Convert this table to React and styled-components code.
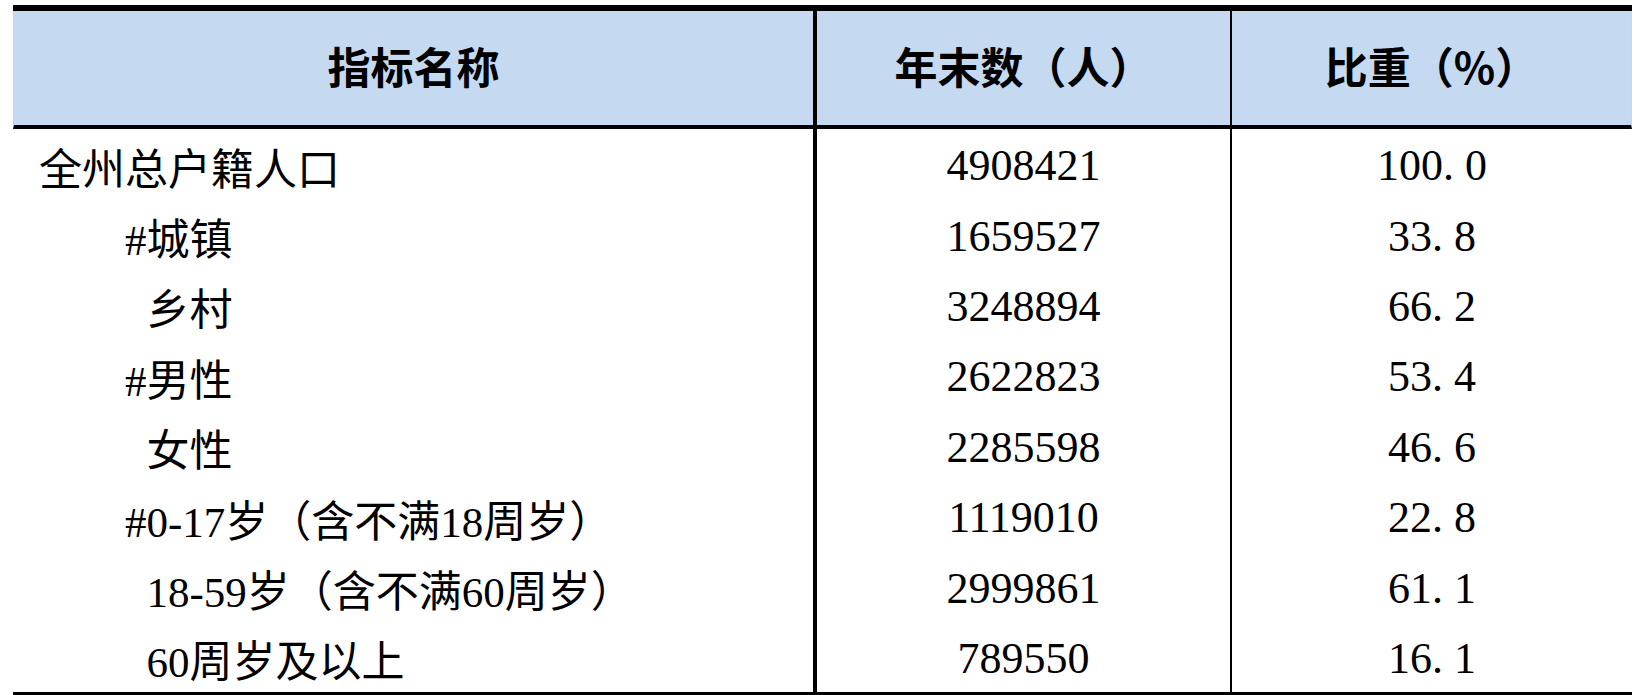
import React from "react";
import styled, { createGlobalStyle } from "styled-components";

const rows = [
  { name: "全州总户籍人口", level: 0, count: "4908421", share: "100.0" },
  { name: "#城镇", level: 1, count: "1659527", share: "33.8" },
  { name: "乡村", level: 2, count: "3248894", share: "66.2" },
  { name: "#男性", level: 1, count: "2622823", share: "53.4" },
  { name: "女性", level: 2, count: "2285598", share: "46.6" },
  { name: "#0-17岁（含不满18周岁）", level: 1, count: "1119010", share: "22.8" },
  { name: "18-59岁（含不满60周岁）", level: 2, count: "2999861", share: "61.1" },
  { name: "60周岁及以上", level: 2, count: "789550", share: "16.1" },
];

const indents = ["0", "2em", "2.5em"];

const GlobalStyle = createGlobalStyle`
  body {
    margin: 0;
    background: #fff;
  }
`;

const Page = styled.div`
  padding: 5px 4px 0 13px;
`;

const Table = styled.div`
  display: grid;
  grid-template-columns: 800px 417px 402px;
  grid-template-rows: 118px repeat(8, 70.4px);
  width: 1619px;
  border-top: 6px solid #000;
  border-bottom: 4px solid #000;
  color: #000;
`;

const HeadCell = styled.div`
  display: flex;
  align-items: center;
  justify-content: center;
  background: #c5d9f1;
  border-bottom: 4px solid #000;
  border-left: ${(p) => p.divider || "1px solid #d4d4d4"};
  border-right: ${(p) => (p.last ? "1px solid #d4d4d4" : "none")};
  font-family: "Noto Sans CJK SC", sans-serif;
  font-weight: 700;
  font-size: 43px;
  padding-bottom: 6px;
`;

const Cell = styled.div`
  display: flex;
  align-items: center;
  justify-content: ${(p) => (p.center ? "center" : "flex-start")};
  border-left: ${(p) => p.divider || "none"};
  font-family: "Liberation Serif", "Noto Sans CJK SC", serif;
  font-size: ${(p) => (p.center ? "44px" : "43px")};
  padding-left: ${(p) => (p.center ? "0" : "26px")};
  padding-top: 3px;
  white-space: nowrap;
`;

const Label = styled.span`
  padding-left: ${(p) => indents[p.level]};
`;

const Latin = styled.span`
  font-family: "Liberation Serif", serif;
`;

const Dot = styled.span`
  letter-spacing: 0.25em;
`;

const Name = ({ text }) =>
  text
    .split(/([#0-9\-]+)/)
    .filter(Boolean)
    .map((part, i) =>
      /^[#0-9\-]+$/.test(part) ? <Latin key={i}>{part}</Latin> : part
    );

const Value = ({ text }) => {
  const [whole, frac] = text.split(".");
  if (frac === undefined) return text;
  return (
    <>
      {whole}
      <Dot>.</Dot>
      {frac}
    </>
  );
};

const thick = "4px solid #000";
const thin = "2px solid #000";

export default function App() {
  return (
    <Page>
      <GlobalStyle />
      <Table>
        <HeadCell>指标名称</HeadCell>
        <HeadCell divider={thick}>年末数（人）</HeadCell>
        <HeadCell divider={thin} last>
          比重（%）
        </HeadCell>
        {rows.map((r) => (
          <React.Fragment key={r.name}>
            <Cell>
              <Label level={r.level}>
                <Name text={r.name} />
              </Label>
            </Cell>
            <Cell center divider={thick}>
              <Value text={r.count} />
            </Cell>
            <Cell center divider={thin}>
              <Value text={r.share} />
            </Cell>
          </React.Fragment>
        ))}
      </Table>
    </Page>
  );
}
